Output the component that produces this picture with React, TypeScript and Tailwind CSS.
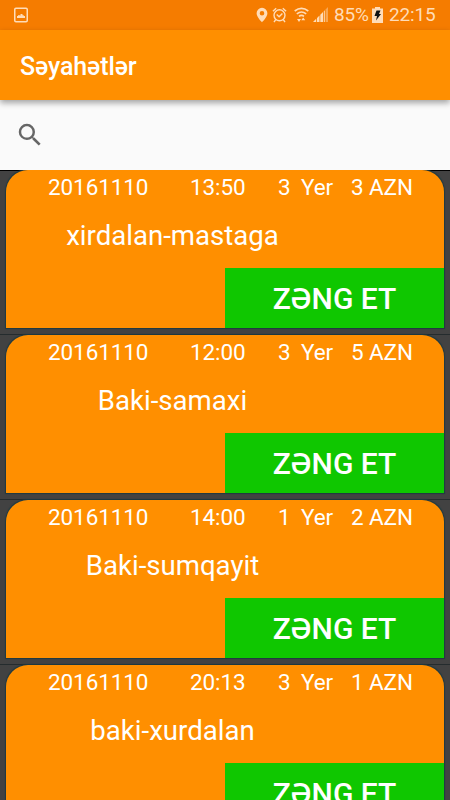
type Trip = { date: string; time: string; seats: string; price: string; route: string };

const trips: Trip[] = [
  { date: "20161110", time: "13:50", seats: "3", price: "3", route: "xirdalan-mastaga" },
  { date: "20161110", time: "12:00", seats: "3", price: "5", route: "Baki-samaxi" },
  { date: "20161110", time: "14:00", seats: "1", price: "2", route: "Baki-sumqayit" },
  { date: "20161110", time: "20:13", seats: "3", price: "1", route: "baki-xurdalan" },
];

function StatusBar() {
  return (
    <div className="flex h-[30px] shrink-0 items-center bg-[#f57c00] pl-[14px] pr-[14px] text-[#ffdcb8]">
      <svg width="14" height="16" viewBox="0 0 14 16" fill="none">
        <rect x="0.75" y="1.25" width="12.5" height="13.5" rx="1.2" stroke="currentColor" strokeWidth="1.5" />
        <path d="M3 11V9h1.2V8h1.3v.6h1V7h2v1.2h1.3V9H11v2z" fill="currentColor" />
      </svg>
      <div className="ml-auto flex items-center">
        <svg width="12" height="16" viewBox="0 0 12 16" fill="currentColor">
          <path fillRule="evenodd" d="M6 .8A5.4 5.4 0 0 0 .6 6.2C.6 9.9 6 15.2 6 15.2s5.4-5.3 5.4-9A5.4 5.4 0 0 0 6 .8zm0 3.1a2.3 2.3 0 1 1 0 4.6 2.3 2.3 0 0 1 0-4.6z" />
        </svg>
        <svg className="ml-[4px]" width="15" height="16" viewBox="0 0 15 16" fill="none" stroke="currentColor" strokeWidth="1.4">
          <circle cx="7.5" cy="8.3" r="5.5" />
          <path d="M.9 4.2 4.2 1.3M14.1 4.2l-3.3-2.9M3.7 12.6 2 15.2M11.3 12.6l1.7 2.6M4.7 7.6l2.4 2.2 3.3-3.4" />
        </svg>
        <svg className="ml-[7px]" width="15" height="16" viewBox="0 0 15 16" fill="none" stroke="currentColor" strokeWidth="1.6">
          <path d="M.7 4Q7.5-1.2 14.3 4M2.8 6.8q4.7-3.7 9.4 0M5 9.4q2.5-2 5 0" />
          <path d="M3 12h4L5 15zM7.2 13.2h4L9.200 10.500z" fill="currentColor" stroke="none" />
        </svg>
        <svg className="ml-[4px]" width="16" height="16" viewBox="0 0 16 16" fill="currentColor">
          <path d="M0 15l3.200-3.200V15zM4 11l2.500-2.500V15H4zM7.300 7.700 10 5v10H7.300zM10.800 4.200 11.800 3.200V15h-1z" />
          <path d="M12.600 2.400 15 0v15h-2.400z" opacity="0.45" />
        </svg>
        <span className="ml-[5px] w-[35px] whitespace-nowrap text-[19px] leading-[30px] tracking-[-0.15px]">85%</span>
        <svg className="ml-[3px]" width="11" height="16" viewBox="0 0 11 16">
          <path d="M3 0h5v1.5h3V16H0V1.5h3z" fill="#ffdcb8" />
          <path d="M4.5 3.500h4L7 7h2l-5 6.500L5 9H2.500z" fill="#111" />
        </svg>
        <span className="ml-[6px] w-[47px] whitespace-nowrap text-[19px] leading-[30px] tracking-[-0.15px]">22:15</span>
      </div>
    </div>
  );
}

function TripCard({ trip }: { trip: Trip }) {
  return (
    <div className="h-[165px] shrink-0 border-b border-[#252c2e] px-[6px]">
      <div className="flex h-[158px] flex-col overflow-hidden rounded-t-[22px] bg-[#ff8f00] shadow-[0_0_1px_0.5px_#1f3a42]">
        <div className="flex h-[34px] whitespace-pre pl-[42px] text-[22.5px] leading-[34px] tracking-[-0.1px]">
          <span className="w-[142px]">{trip.date}</span>
          <span className="w-[88px]">{trip.time}</span>
          <span className="w-[23px]">{trip.seats}</span>
          <span className="w-[50px]">Yer</span>
          <span>{trip.price} AZN</span>
        </div>
        <div className="h-[64px] w-[333px] text-center text-[27.6px] leading-[63px]">{trip.route}</div>
        <button className="h-[60px] w-[219px] shrink-0 self-end bg-[#0fc700] text-center text-[30px] font-medium leading-[61px]">
          ZƏNG ET
        </button>
      </div>
    </div>
  );
}

export default function App() {
  return (
    <div className="flex h-[800px] w-[450px] flex-col overflow-hidden bg-[#424242] font-['Roboto',sans-serif] text-white">
      <StatusBar />
      <header className="z-10 flex h-[70px] shrink-0 items-center bg-[#ff8f00] px-[20px] shadow-[0_3px_6px_rgba(0,0,0,0.35)]">
        <h1 className="pt-[3px] text-[25px] font-medium leading-[30px] tracking-[-0.1px]">Səyahətlər</h1>
      </header>
      <div className="flex h-[70px] shrink-0 items-center bg-[#fafafa] pl-[15px]">
        <svg width="30" height="30" viewBox="0 0 24 24" fill="#666">
          <path d="M15.5 14h-.79l-.28-.27A6.471 6.471 0 0 0 16 9.5 6.5 6.5 0 1 0 9.5 16c1.61 0 3.09-.59 4.23-1.57l.27.28v.79l5 4.99L20.49 19l-4.99-5zm-6 0C7.01 14 5 11.99 5 9.5S7.01 5 9.5 5 14 7.01 14 9.5 11.99 14 9.5 14z" />
        </svg>
      </div>
      <main className="flex min-h-0 flex-1 flex-col overflow-hidden bg-[linear-gradient(#000_1px,transparent_1px)]">
        {trips.map((trip) => (
          <TripCard key={trip.route} trip={trip} />
        ))}
      </main>
    </div>
  );
}
